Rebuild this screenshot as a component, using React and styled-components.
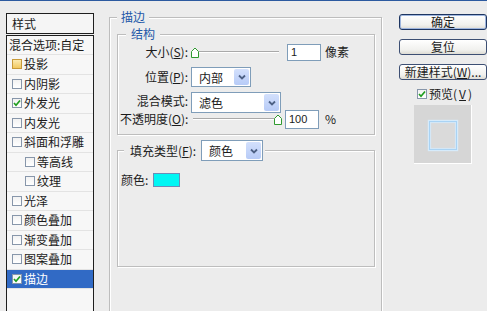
import React from 'react';
import styled, { createGlobalStyle } from 'styled-components';

const GlobalStyle = createGlobalStyle`
  html, body { margin: 0; background: #ececec; }
  body {
    font-family: "Noto Sans CJK SC", "Liberation Sans", sans-serif;
    font-size: 12px;
    color: #1b1b1b;
  }
  * { box-sizing: border-box; }
`;

const Window = styled.div`
  height: 311px;
  overflow: hidden;
  border-top: 1px solid #2c5aa0;
  display: flex;
  align-items: flex-start;
`;

/* ---------- left style list ---------- */

const StylePanel = styled.div`
  margin: 12px 0 0 6px;
  width: 90px;
  height: 300px;
  display: flex;
  flex-direction: column;
  gap: 1px;
`;

const PanelHeader = styled.div`
  height: 21px;
  border: 1px solid #1e1e1e;
  background: #f5f5f5;
  padding-left: 5px;
  line-height: 19px;
`;

const List = styled.div`
  flex: 1;
  border: 1px solid #1e1e1e;
  border-bottom: none;
  background: #f7f7f7;
`;

const ListItem = styled.div`
  height: ${({ $h }) => $h || 19.5}px;
  display: flex;
  align-items: center;
  gap: 2px;
  padding-left: ${({ $indent, $plain }) => ($plain ? 2 : $indent ? 18 : 5)}px;
  border-bottom: 1px solid #e3e3e3;
  background: ${({ $selected }) => ($selected ? '#316ac5' : 'transparent')};
  color: ${({ $selected }) => ($selected ? '#fff' : '#1b1b1b')};
  white-space: nowrap;
  line-height: 1;
`;

const Box = styled.span`
  width: 10px;
  height: 10px;
  flex: none;
  display: inline-flex;
  align-items: center;
  justify-content: center;
  border: 1px solid ${({ $hover }) => ($hover ? '#c89a3a' : '#8796aa')};
  background: ${({ $hover }) =>
    $hover ? 'linear-gradient(#fbeab0, #f2c960)' : 'linear-gradient(#f2f2f2, #ffffff)'};
`;

const Check = ({ checked, hover }) => (
  <Box $hover={hover}>
    {checked && (
      <svg width="8" height="8" viewBox="0 0 8 8">
        <path d="M1 4 L3 6.2 L7 1.5" fill="none" stroke="#1f9d1f" strokeWidth="1.7" />
      </svg>
    )}
  </Box>
);

const styleItems = [
  { label: '投影', hover: true },
  { label: '内阴影' },
  { label: '外发光', checked: true },
  { label: '内发光' },
  { label: '斜面和浮雕' },
  { label: '等高线', indent: true },
  { label: '纹理', indent: true },
  { label: '光泽' },
  { label: '颜色叠加' },
  { label: '渐变叠加' },
  { label: '图案叠加' },
  { label: '描边', checked: true, selected: true },
];

/* ---------- group boxes ---------- */

const Group = styled.fieldset`
  margin: ${({ $mt }) => $mt || 0}px 0 0;
  min-width: 0;
  border: 1px solid #bdbdbd;
  box-shadow: inset 1px 1px 0 #fff, 1px 1px 0 #fff;
  padding: ${({ $pad }) => $pad};
`;

const Legend = styled.legend`
  margin-left: ${({ $ml }) => $ml || 0}px;
  padding: ${({ $pad }) => $pad || '0 5px'};
  line-height: 16px;
  color: ${({ $plain }) => ($plain ? '#1b1b1b' : '#2357a8')};
  background: #ececec;
  display: flex;
  align-items: center;
  gap: 5px;
`;

const MainArea = styled(Group)`
  margin: 8px 0 0 15px;
  width: 273px;
  height: 340px;
  flex: none;
`;

const Row = styled.div`
  height: ${({ $h }) => $h}px;
  margin-top: ${({ $mt }) => $mt || 0}px;
  display: flex;
  align-items: ${({ $top }) => ($top ? 'flex-start' : 'center')};
  white-space: nowrap;
`;

const Label = styled.span`
  width: ${({ $w }) => $w || 68}px;
  flex: none;
  text-align: ${({ $left }) => ($left ? 'left' : 'right')};
  margin-right: ${({ $gap }) => ($gap === undefined ? 3 : $gap)}px;
  line-height: 1;
`;

const Unit = styled.span`
  margin-left: ${({ $ml }) => $ml || 4}px;
  line-height: 1;
`;

/* ---------- controls ---------- */

const Slider = styled.div`
  width: ${({ $w }) => $w}px;
  margin-left: ${({ $ml }) => $ml || 0}px;
  height: 12px;
  display: flex;
  align-items: center;
  flex-direction: ${({ $max }) => ($max ? 'row-reverse' : 'row')};
`;

const Track = styled.div`
  flex: 1;
  height: 2px;
  border-top: 1px solid #a9a9a9;
  border-bottom: 1px solid #ffffff;
`;

const Thumb = () => (
  <svg width="8" height="11" viewBox="0 0 8 11" style={{ flex: 'none' }}>
    <path d="M0.5 10.5 V4.5 L4 1 L7.5 4.5 V10.5 Z" fill="#fff" stroke="#2f9a2f" strokeWidth="1" />
  </svg>
);

const NumberField = styled.div`
  width: 34px;
  height: ${({ $h }) => $h || 17}px;
  margin-left: ${({ $ml }) => $ml || 0}px;
  border: 1px solid #7f9db9;
  background: #fff;
  padding-left: 3px;
  display: flex;
  align-items: center;
  font-family: "Liberation Sans", sans-serif;
  font-size: 11px;
`;

const SelectBox = styled.div`
  width: ${({ $w }) => $w}px;
  height: ${({ $h }) => $h || 20}px;
  border: 1px solid #7f9db9;
  background: #fff;
  display: flex;
  align-items: stretch;
  padding: 1px;
`;

const SelectValue = styled.span`
  flex: 1;
  padding-left: 6px;
  display: flex;
  align-items: center;
`;

const DropButton = styled.span`
  width: 15px;
  border-radius: 2px;
  background: linear-gradient(#d3e0fc, #b7cbf7);
  display: flex;
  align-items: center;
  justify-content: center;
`;

const Select = ({ value, w, h }) => (
  <SelectBox $w={w} $h={h}>
    <SelectValue>{value}</SelectValue>
    <DropButton>
      <svg width="8" height="6" viewBox="0 0 8 6">
        <path d="M1 1.5 L4 4.5 L7 1.5" fill="none" stroke="#4d6185" strokeWidth="1.8" />
      </svg>
    </DropButton>
  </SelectBox>
);

const Swatch = styled.span`
  width: 27px;
  height: 14px;
  border: 1px solid #6b8db8;
  background: #00f6f4;
`;

/* ---------- right column ---------- */

const Side = styled.div`
  margin: 13px 0 0 17px;
  width: 88px;
  flex: none;
  display: flex;
  flex-direction: column;
  gap: 9px;
`;

const Button = styled.div`
  height: 16px;
  border: 1px solid ${({ $default }) => ($default ? '#1d3561' : '#3d4f73')};
  border-radius: 3px;
  background: linear-gradient(#ffffff, #f1f1ee 70%, #dedcd4);
  box-shadow: ${({ $default }) => ($default ? 'inset 0 0 0 1px #9fb6de' : 'none')};
  display: flex;
  align-items: center;
  justify-content: center;
  line-height: 1;
  white-space: nowrap;
`;

const PreviewToggle = styled.div`
  margin: -2px 0 0 18px;
  height: 13px;
  display: flex;
  align-items: center;
  gap: 2px;
  line-height: 1;
`;

const PreviewBox = styled.div`
  margin: -4px 0 0 15px;
  width: 58px;
  height: 59px;
  background: #d6d6d6;
  border-right: 1px solid #fff;
  border-bottom: 1px solid #fff;
  display: flex;
  align-items: center;
  justify-content: center;
`;

const PreviewSquare = styled.div`
  width: 28px;
  height: 29px;
  margin-top: 2px;
  border: 1px solid #a9d3f4;
  box-shadow: 0 0 1px 1px #d6ebfb, inset 0 0 1px 1px #d3e8f9;
  background: #dadada;
`;

export default function App() {
  return (
    <>
      <GlobalStyle />
      <Window>
        <StylePanel>
          <PanelHeader>样式</PanelHeader>
          <List>
            <ListItem $h={19} $plain>混合选项:自定</ListItem>
            {styleItems.map((it) => (
              <ListItem key={it.label} $indent={it.indent} $selected={it.selected}>
                <Check checked={it.checked} hover={it.hover} />
                {it.label}
              </ListItem>
            ))}
          </List>
        </StylePanel>

        <MainArea $pad="0 6px 0 7px">
          <Legend $pad="0 4px">描边</Legend>

          <Group $mt={1} $pad="0 6px 6px 2px">
            <Legend $ml={6}>结构</Legend>
            <Row $h={20}>
              <Label>大小(<u>S</u>):</Label>
              <Slider $w={88}>
                <Thumb />
                <Track />
              </Slider>
              <NumberField $ml={8}>1</NumberField>
              <Unit>像素</Unit>
            </Row>
            <Row $h={22} $mt={4}>
              <Label>位置(<u>P</u>):</Label>
              <Select value="内部" w={60} />
            </Row>
            <Row $h={18} $mt={4} $top>
              <Label style={{ alignSelf: 'center' }}>混合模式:</Label>
              <Select value="滤色" w={90} h={21} />
            </Row>
            <Row $h={18}>
              <Label>不透明度(<u>O</u>):</Label>
              <Slider $w={89} $ml={2} $max>
                <Thumb />
                <Track />
              </Slider>
              <NumberField $h={19} $ml={3}>100</NumberField>
              <Unit $ml={6}>%</Unit>
            </Row>
          </Group>

          <Group $mt={5} $pad="0 6px 78px 3px">
            <Legend $ml={3} $pad="0 2px 0 6px" $plain>
              <span>填充类型(<u>F</u>):</span>
              <Select value="颜色" w={62} h={21} />
            </Legend>
            <Row $h={16} $mt={11}>
              <Label $w={27} $left $gap={5}>颜色:</Label>
              <Swatch />
            </Row>
          </Group>
        </MainArea>

        <Side>
          <Button $default>确定</Button>
          <Button>复位</Button>
          <Button>新建样式(<u>W</u>)...</Button>
          <PreviewToggle>
            <Check checked />
            预览(<u>V</u>)
          </PreviewToggle>
          <PreviewBox>
            <PreviewSquare />
          </PreviewBox>
        </Side>
      </Window>
    </>
  );
}
